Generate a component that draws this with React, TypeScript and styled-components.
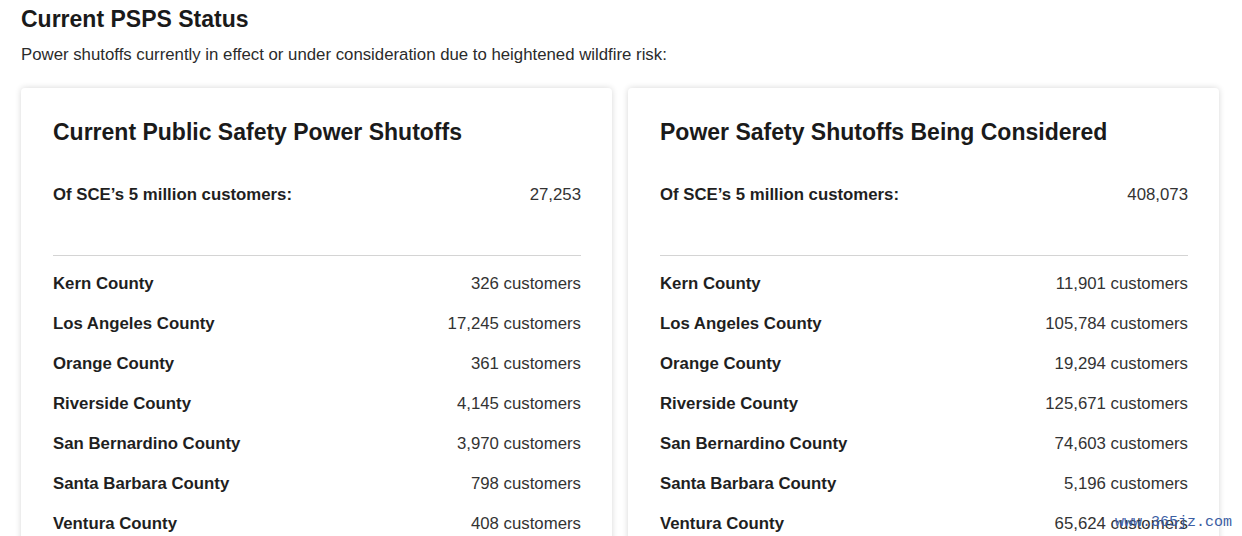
import React from "react";
import styled, { createGlobalStyle } from "styled-components";

const GlobalStyle = createGlobalStyle`
  html, body { margin: 0; padding: 0; background: #ffffff; }
  body { font-family: "Liberation Sans", Arial, sans-serif; color: #1a1a1a; overflow: hidden; }
`;

const Page = styled.div`
  position: relative;
  width: 1242px;
  height: 536px;
  overflow: hidden;
  padding: 4px 23px 0 21px;
  box-sizing: border-box;
`;

const Heading = styled.h2`
  margin: 0;
  font-size: 23px;
  font-weight: 700;
  line-height: 31px;
  color: #1a1a1a;
`;

const Intro = styled.p`
  margin: 8px 0 0;
  font-size: 16.8px;
  line-height: 24px;
  color: #2b2b2b;
`;

const Cards = styled.div`
  display: grid;
  grid-template-columns: 591px 591px;
  gap: 16px;
  margin-top: 21px;
`;

const Card = styled.section`
  background: #fff;
  border-radius: 4px;
  box-shadow: 0 0 6px rgba(0, 0, 0, 0.16);
  padding: 26px 31px 40px 32px;
  height: 520px;
  box-sizing: border-box;
`;

const CardTitle = styled.h3`
  margin: 0;
  font-size: 23px;
  font-weight: 700;
  line-height: 36px;
  color: #1a1a1a;
`;

const Total = styled.div`
  display: flex;
  justify-content: space-between;
  align-items: center;
  margin-top: 33px;
  padding-bottom: 48px;
  border-bottom: 1px solid #d4d4d4;
  line-height: 24px;
`;

const Label = styled.span`
  font-size: 16.8px;
  font-weight: 700;
  color: #1f1f1f;
`;

const Value = styled.span`
  font-size: 16.8px;
  color: #333;
`;

const List = styled.div`
  display: flex;
  flex-direction: column;
  padding-top: 8px;
`;

const Row = styled.div`
  display: flex;
  justify-content: space-between;
  align-items: center;
  height: 40px;
`;

const Watermark = styled.div`
  position: absolute;
  right: 10px;
  bottom: 5px;
  font-family: "Liberation Mono", "Courier New", monospace;
  font-size: 15px;
  line-height: 17px;
  color: #3c5ea3;
`;

type County = { name: string; count: string };

const current: County[] = [
  { name: "Kern County", count: "326" },
  { name: "Los Angeles County", count: "17,245" },
  { name: "Orange County", count: "361" },
  { name: "Riverside County", count: "4,145" },
  { name: "San Bernardino County", count: "3,970" },
  { name: "Santa Barbara County", count: "798" },
  { name: "Ventura County", count: "408" },
];

const considered: County[] = [
  { name: "Kern County", count: "11,901" },
  { name: "Los Angeles County", count: "105,784" },
  { name: "Orange County", count: "19,294" },
  { name: "Riverside County", count: "125,671" },
  { name: "San Bernardino County", count: "74,603" },
  { name: "Santa Barbara County", count: "5,196" },
  { name: "Ventura County", count: "65,624" },
];

function StatusCard({ title, total, rows }: { title: string; total: string; rows: County[] }) {
  return (
    <Card>
      <CardTitle>{title}</CardTitle>
      <Total>
        <Label>Of SCE’s 5 million customers:</Label>
        <Value>{total}</Value>
      </Total>
      <List>
        {rows.map((r) => (
          <Row key={r.name}>
            <Label>{r.name}</Label>
            <Value>{r.count} customers</Value>
          </Row>
        ))}
      </List>
    </Card>
  );
}

export default function App() {
  return (
    <>
      <GlobalStyle />
      <Page>
        <Heading>Current PSPS Status</Heading>
        <Intro>Power shutoffs currently in effect or under consideration due to heightened wildfire risk:</Intro>
        <Cards>
          <StatusCard title="Current Public Safety Power Shutoffs" total="27,253" rows={current} />
          <StatusCard title="Power Safety Shutoffs Being Considered" total="408,073" rows={considered} />
        </Cards>
        <Watermark>www.365jz.com</Watermark>
      </Page>
    </>
  );
}
